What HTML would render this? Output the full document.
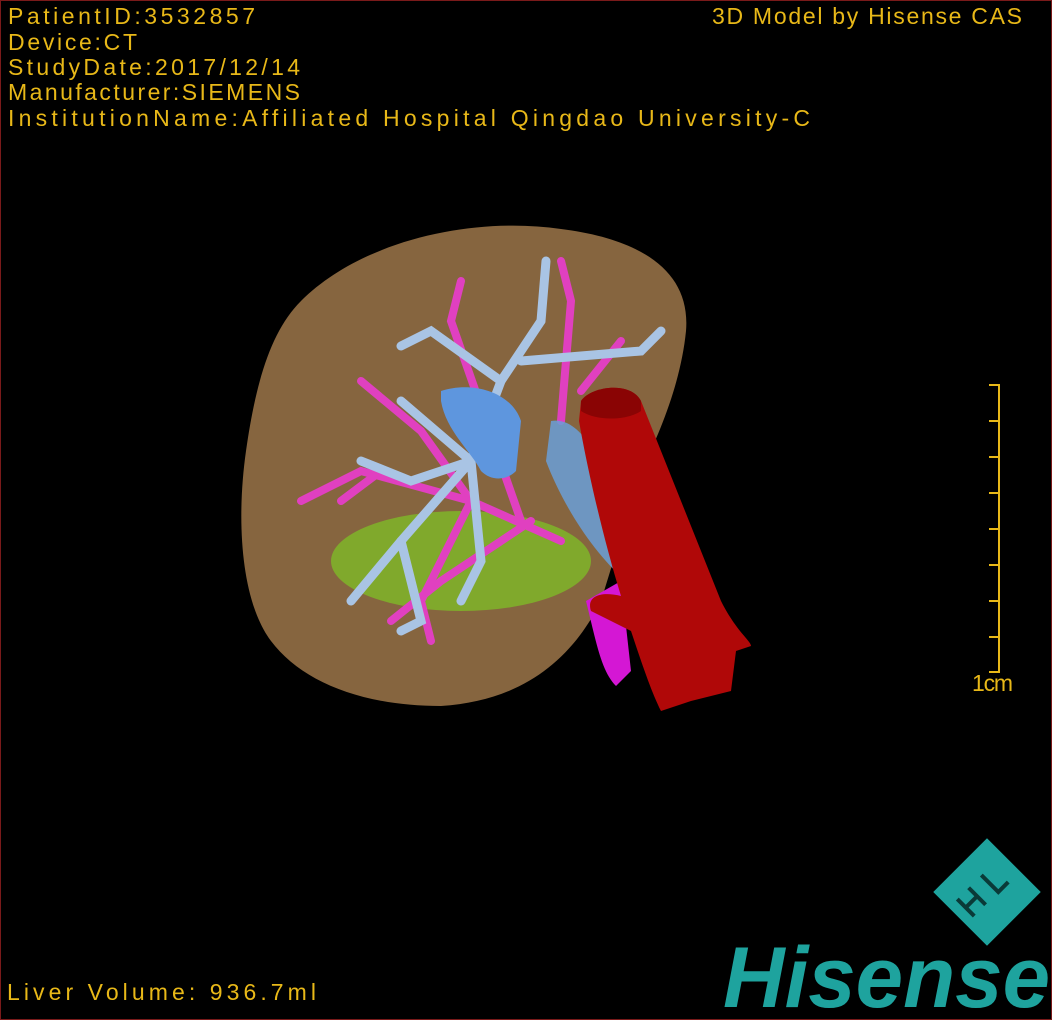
<!DOCTYPE html>
<html><head><meta charset="utf-8"><style>
html,body{margin:0;padding:0;background:#000;}
#w{position:relative;width:1050px;height:1018px;border:1px solid #7a1a1a;background:#000;overflow:hidden;}
</style></head><body><div id="w">
<svg style="position:absolute;left:0;top:0" width="1050" height="1018">
<g font-family="Liberation Sans,sans-serif" font-size="23" fill="#e8b818" lengthAdjust="spacingAndGlyphs">
<text x="7" y="23" textLength="247">PatientID:3532857</text>
<text x="7" y="49" textLength="129">Device:CT</text>
<text x="7" y="74" textLength="292">StudyDate:2017/12/14</text>
<text x="7" y="99" textLength="292">Manufacturer:SIEMENS</text>
<text x="7" y="125" textLength="802">InstitutionName:Affiliated Hospital Qingdao University-C</text>
<text x="711" y="23" textLength="310">3D Model by Hisense CAS</text>
<text x="6" y="999" textLength="309">Liver Volume:  936.7ml</text>
<text x="971" y="690" textLength="41">1cm</text>
</g>
<g stroke="#e8b818" stroke-width="2">
<line x1="998" y1="383" x2="998" y2="672"/>
<line x1="988" y1="384" x2="998" y2="384"/><line x1="988" y1="420" x2="998" y2="420"/><line x1="988" y1="456" x2="998" y2="456"/><line x1="988" y1="492" x2="998" y2="492"/><line x1="988" y1="528" x2="998" y2="528"/><line x1="988" y1="564" x2="998" y2="564"/><line x1="988" y1="600" x2="998" y2="600"/><line x1="988" y1="636" x2="998" y2="636"/><line x1="988" y1="671" x2="998" y2="671"/>
</g>
<path d="M300,300 C360,240 470,215 560,228 C640,238 690,270 685,330 C680,380 660,430 640,470 L600,600 C570,660 520,700 440,705 C360,705 300,680 270,640 C240,600 235,520 245,450 C255,380 270,330 300,300 Z" fill="#86653f"/>
<ellipse cx="460" cy="560" rx="130" ry="50" fill="#7fb02a" opacity="0.9"/>
<g stroke="#e040c0" stroke-width="8" fill="none" stroke-linecap="round">
<path d="M560,540 L470,500 L360,470 L300,500"/><path d="M470,500 L420,430 L360,380"/><path d="M530,520 L440,580 L390,620"/><path d="M520,520 L450,320 L460,280"/><path d="M560,420 L570,300 L560,260"/><path d="M580,390 L620,340"/><path d="M470,500 L420,600 L430,640"/><path d="M380,470 L340,500"/>
</g>
<g stroke="#a9c4e4" stroke-width="9" fill="none" stroke-linecap="round">
<path d="M540,320 L500,380 L470,460 L400,540 L350,600"/><path d="M470,460 L410,480 L360,460"/><path d="M540,320 L545,260"/><path d="M500,380 L430,330 L400,345"/><path d="M470,460 L480,560 L460,600"/><path d="M520,360 L640,350 L660,330"/><path d="M400,540 L420,620 L400,630"/><path d="M470,460 L400,400"/>
</g>
<path d="M440,390 C470,380 510,390 520,420 L515,470 C505,480 490,480 480,470 C470,450 445,430 440,400 Z" fill="#5e96de"/>
<path d="M550,420 C580,415 600,460 615,500 L640,575 L625,580 C590,550 560,500 545,460 Z" fill="#6a9fd8" opacity="0.85"/>
<path d="M585,600 L620,580 L630,670 L615,685 C600,670 595,640 585,600 Z" fill="#d417d4"/>
<path d="M580,400 C590,385 630,380 640,400 L720,600 C735,630 750,640 750,645 L735,650 L730,690 L690,700 L660,710 C650,690 640,660 630,630 L590,610 C585,595 600,590 620,595 C600,530 585,460 578,420 Z" fill="#b00808"/>
<path d="M580,400 C590,385 630,380 640,400 L640,410 C625,420 595,420 580,410 Z" fill="#8a0404"/>
<g transform="translate(986,891) rotate(45)">
<rect x="-38" y="-38" width="76" height="76" fill="#1ea39e"/>
<g stroke="#0a3a38" stroke-width="4" fill="none" transform="rotate(-90)">
<path d="M-26,-16 L-26,8 M-10,-16 L-10,8 M-26,-4 L-10,-4"/>
<path d="M8,-16 L8,8 L22,8"/>
</g>
</g>
<text x="722" y="1006" font-family="Liberation Sans,sans-serif" font-weight="bold" font-style="italic" font-size="86" fill="#1ea39e" textLength="327" lengthAdjust="spacingAndGlyphs">Hisense</text>
</svg>
</div></body></html>
